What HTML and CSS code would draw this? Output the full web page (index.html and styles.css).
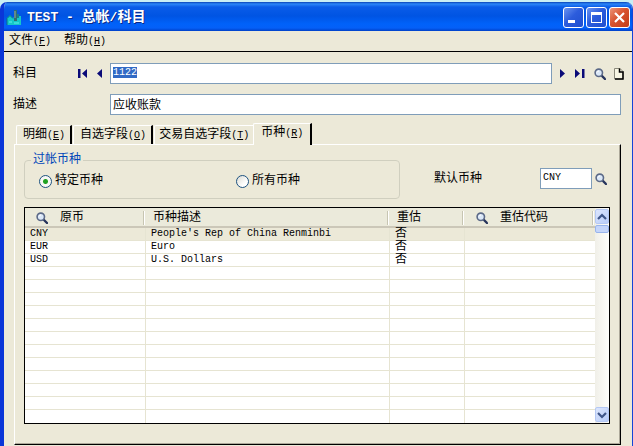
FILE: index.html
```html
<!DOCTYPE html>
<html lang="zh-CN">
<head>
    <meta charset="UTF-8">
    <meta name="viewport" content="width=device-width, initial-scale=1.0">
    <title>TEST - 总帐/科目</title>
    <link rel="stylesheet" href="styles.css">
</head>
<body>

    <svg class="sprite" aria-hidden="true">
        <symbol id="search" viewBox="0 0 12 12">
            <path d="M7.5 7.5L11 11" stroke="#27345c" stroke-width="2.4" stroke-linecap="round"/>
            <circle cx="4.8" cy="4.8" r="3.7" fill="#dbe8f8" stroke="#5c6a88" stroke-width="1.6"/>
            <path d="M3 4.5Q3.3 3 5 3" stroke="#fff" fill="none"/>
        </symbol>
    </svg>

    <div class="window">
        <header class="titlebar">
            <svg class="app-icon" width="16" height="16" viewBox="0 0 16 16" aria-hidden="true">
                <path d="M1 8L4 5L7 8L10 6H15V15H1Z" fill="#14c8c8"/>
                <path d="M8 0H11V11H8Z" fill="#2f6e72"/>
                <path d="M9 1V8" stroke="#9aa6a0"/>
                <path d="M11 4H13V8H11Z" fill="#1b7f8c"/>
                <path d="M1 15V8.500L4 5.500L7 8.500" stroke="#0a6f86" fill="none"/>
                <path d="M3 12H6M8 13H13" stroke="#5ff0e8"/>
            </svg>
            <h1><span class="en">TEST - </span>总帐<span class="en">/</span>科目</h1>
            <div class="win-buttons">
                <button class="win-btn" aria-label="最小化"><svg width="19" height="19" viewBox="0 0 19 19"><path d="M4 12H11V15H4Z" fill="#fff"/></svg></button>
                <button class="win-btn" aria-label="最大化"><svg width="19" height="19" viewBox="0 0 19 19"><path d="M4 4H15V15H4ZM5 7V14H14V7Z" fill="#fff" fill-rule="evenodd"/></svg></button>
                <button class="win-btn close" aria-label="关闭"><svg width="19" height="19" viewBox="0 0 19 19"><path d="M5 5L14 14M14 5L5 14" stroke="#fff" stroke-width="2.2"/></svg></button>
            </div>
        </header>

        <nav class="menubar">
            <button>文件<span class="en">(<u>F</u>)</span></button>
            <button>帮助<span class="en">(<u>H</u>)</span></button>
        </nav>

        <main>
            <div class="form">
                <div class="field-label">
                    <label for="account">科目</label>
                    <div class="nav-buttons">
                        <button class="icon-btn" aria-label="第一条"><svg width="12" height="11" viewBox="0 0 12 11"><path d="M1 1H3.500V10H1ZM10 1V10L5 5.500Z" fill="#0a0a78"/></svg></button>
                        <button class="icon-btn" aria-label="上一条"><svg width="6" height="11" viewBox="0 0 6 11"><path d="M5 1V10L0 5.500Z" fill="#0a0a78"/></svg></button>
                    </div>
                </div>
                <input type="text" id="account" class="en" value="1122">
                <div class="nav-buttons after">
                    <button class="icon-btn" aria-label="下一条"><svg width="6" height="11" viewBox="0 0 6 11"><path d="M0 1V10L5 5.500Z" fill="#0a0a78"/></svg></button>
                    <button class="icon-btn" aria-label="最后一条"><svg width="12" height="11" viewBox="0 0 12 11"><path d="M1 1V10L6 5.500ZM8 1H10.500V10H8Z" fill="#0a0a78"/></svg></button>
                    <button class="icon-btn" aria-label="查找"><svg width="12" height="12"><use href="#search"/></svg></button>
                    <button class="icon-btn" aria-label="新建"><svg width="10" height="12" viewBox="0 0 10 12"><path d="M.5 .5H6L9 3.500V11H.5Z" fill="#f8f6e4" stroke="#8a887a"/><path d="M5.500 .5V4H9V11H1" fill="none" stroke="#000" stroke-width="1.500"/></svg></button>
                </div>
                <label class="field-label" for="description">描述</label>
                <input type="text" id="description" class="wide" value="应收账款">
            </div>

            <div class="tabs" role="tablist">
                <button class="tab" role="tab">明细<span class="en">(<u>E</u>)</span></button>
                <button class="tab" role="tab">自选字段<span class="en">(<u>O</u>)</span></button>
                <button class="tab before-active" role="tab">交易自选字段<span class="en">(<u>T</u>)</span></button>
                <button class="tab active" role="tab" aria-selected="true">币种<span class="en">(<u>R</u>)</span></button>
            </div>

            <section class="panel">
                <div class="options">
                    <fieldset>
                        <legend>过帐币种</legend>
                        <label><input type="radio" name="posting" checked>特定币种</label>
                        <label><input type="radio" name="posting">所有币种</label>
                    </fieldset>
                    <div class="default-currency">
                        <label for="currency">默认币种</label>
                        <input type="text" id="currency" class="en" value="CNY">
                        <button class="icon-btn" aria-label="查找币种"><svg width="12" height="12"><use href="#search"/></svg></button>
                    </div>
                </div>

                <div class="list">
                    <table>
                        <colgroup>
                            <col class="col-code">
                            <col>
                            <col class="col-revalue">
                            <col class="col-revalue-code">
                        </colgroup>
                        <thead>
                            <tr>
                                <th><div class="head finder"><svg width="12" height="12"><use href="#search"/></svg>原币</div></th>
                                <th><div class="head">币种描述</div></th>
                                <th><div class="head">重估</div></th>
                                <th><div class="head finder"><svg width="12" height="12"><use href="#search"/></svg>重估代码</div></th>
                            </tr>
                        </thead>
                        <tbody>
                            <tr class="selected"><td>CNY</td><td>People's Rep of China Renminbi</td><td class="cn">否</td><td></td></tr>
                            <tr><td>EUR</td><td>Euro</td><td class="cn">否</td><td></td></tr>
                            <tr><td>USD</td><td>U.S. Dollars</td><td class="cn">否</td><td></td></tr>
                            <tr><td></td><td></td><td></td><td></td></tr>
                            <tr><td></td><td></td><td></td><td></td></tr>
                            <tr><td></td><td></td><td></td><td></td></tr>
                            <tr><td></td><td></td><td></td><td></td></tr>
                            <tr><td></td><td></td><td></td><td></td></tr>
                            <tr><td></td><td></td><td></td><td></td></tr>
                            <tr><td></td><td></td><td></td><td></td></tr>
                            <tr><td></td><td></td><td></td><td></td></tr>
                            <tr><td></td><td></td><td></td><td></td></tr>
                            <tr><td></td><td></td><td></td><td></td></tr>
                            <tr><td></td><td></td><td></td><td></td></tr>
                            <tr><td></td><td></td><td></td><td></td></tr>
                        </tbody>
                    </table>
                    <div class="scrollbar">
                        <button class="scroll-btn" aria-label="向上"><svg width="10" height="8" viewBox="0 0 10 8"><path d="M1 6L5 2L9 6" fill="none" stroke="#3f5688" stroke-width="2.2"/></svg></button>
                        <div class="thumb"></div>
                        <button class="scroll-btn down" aria-label="向下"><svg width="10" height="8" viewBox="0 0 10 8"><path d="M1 2L5 6L9 2" fill="none" stroke="#3f5688" stroke-width="2.2"/></svg></button>
                    </div>
                </div>
            </section>
        </main>
    </div>

    <script>
        const account = document.querySelector('#account');
        account.focus();
        account.select();
    </script>

</body>
</html>
```

FILE: styles.css
```css
* {
    box-sizing: border-box;
}

body {
    margin: 0;
    padding-top: 2px;
    background-color: #c9eef5;
    font-family: "Liberation Mono", "Noto Sans CJK SC", monospace;
    font-size: 12px;
    line-height: 16px;
    color: black;
}

button,
input {
    font: inherit;
    color: inherit;
}

button {
    margin: 0;
    padding: 0;
    border: none;
    background: none;
}

svg {
    display: block;
}

.sprite {
    position: absolute;
    width: 0;
    height: 0;
}

/* latin text is half the width of a chinese character */
.en {
    font-size: 10px;
}

.window {
    min-height: calc(100vh - 2px);
    border-left: 4px solid #0a36d8;
    border-right: 1px solid #1444d8;
    border-radius: 7px 7px 0 0;
    background-color: #ece9d8;
    overflow: hidden;
}

/* title bar */
.titlebar {
    display: flex;
    align-items: center;
    height: 29px;
    margin-left: -4px;
    padding: 2px 2px 0 6px;
    background: linear-gradient(#0842b8 0, #2a86f8 2px, #0a5ce8 5px, #0054e3 14px, #0062fa 22px, #0460f8 26px, #0040c8 29px);
}

.titlebar h1 {
    flex: 1;
    margin: 0 0 0 5px;
    font-size: 14px;
    line-height: 20px;
    font-weight: bold;
    color: white;
    white-space: pre;
    text-shadow: 1px 1px #0a2a88;
}

.titlebar .en {
    font-size: 13px;
}

.win-buttons {
    display: flex;
    gap: 2px;
}

.win-btn {
    width: 21px;
    height: 21px;
    border: 1px solid white;
    border-radius: 3px;
    background: linear-gradient(135deg, #6a94f0, #2c5cdc 45%, #1f4fd0);
}

.win-btn.close {
    background: linear-gradient(135deg, #ec9478, #d8532f 45%, #c23c18);
}

/* menu */
.menubar {
    display: flex;
    gap: 13px;
    height: 21px;
    padding: 1px 5px 0;
    border-bottom: 1px solid black;
}

main {
    padding: 11px 11px 0 9px;
}

/* account fields */
.form {
    display: grid;
    grid-template-columns: 97px 1fr 69px;
    row-gap: 10px;
}

.field-label {
    display: flex;
    justify-content: space-between;
    align-items: center;
    padding-right: 7px;
}

.nav-buttons {
    display: flex;
    align-items: center;
    gap: 8px;
}

.nav-buttons.after {
    justify-content: space-between;
    padding-left: 8px;
}

input[type="text"] {
    width: 100%;
    height: 21px;
    padding: 0 2px 2px;
    border: 1px solid #7f9db9;
    background-color: white;
    outline: none;
}

input::selection {
    background-color: #316ac5;
    color: white;
}

.wide {
    grid-column: 2 / 4;
}

/* tabs */
.tabs {
    display: flex;
    align-items: flex-end;
    height: 21px;
    margin-top: 8px;
    padding-left: 3px;
}

.tab {
    height: 19px;
    margin-right: 1px;
    padding: 0 5px 0 6px;
    border-top: 1px solid white;
    border-left: 1px solid white;
    border-right: 2px solid black;
    border-radius: 2px 0 0 0;
}

.tab.before-active {
    margin-right: 0;
    padding: 0 4px;
    border-right: none;
}

.tab.active {
    height: 22px;
    margin-bottom: -1px;
    padding: 0 7px 2px;
    background-color: #ece9d8;
    z-index: 1;
}

.panel {
    margin-left: 1px;
    padding: 7px 10px 20px 9px;
    border-top: 1px solid white;
    border-left: 1px solid white;
    border-right: 1px solid black;
    border-bottom: 1px solid black;
    box-shadow: inset -1px -1px #aca899;
}

.options {
    display: flex;
}

fieldset {
    display: flex;
    flex: 1;
    min-width: 0;
    height: 47px;
    margin: 0;
    padding: 5px 14px 0;
    border: 1px solid #d0cfbf;
    border-radius: 4px;
}

legend {
    margin-left: -8px;
    padding: 0 2px;
    color: #0046b8;
}

fieldset label {
    display: flex;
    flex: 0 0 197px;
    align-items: center;
    gap: 3px;
    height: 16px;
}

input[type="radio"] {
    appearance: none;
    width: 13px;
    height: 13px;
    margin: 0;
    border: 1px solid #1d5281;
    border-radius: 50%;
    background: linear-gradient(135deg, #dcdcd4, white 70%);
}

input[type="radio"]:checked {
    background: radial-gradient(circle, #21a121 0 2px, #f8f8f4 3px);
}

.default-currency {
    display: flex;
    align-items: center;
    gap: 3px;
    width: 210px;
    padding: 6px 3px 0 34px;
}

.default-currency label {
    flex: 1;
}

.default-currency input[type="text"] {
    width: 52px;
}

/* currency list */
.list {
    display: flex;
    margin-top: 8px;
    border: 1px solid black;
    background-color: white;
}

table {
    flex: 1;
    table-layout: fixed;
    border-spacing: 0;
    font-size: 10px;
    line-height: 12px;
}

.col-code {
    width: 121px;
}

.col-revalue {
    width: 75px;
}

.col-revalue-code {
    width: 130px;
}

th {
    height: 20px;
    padding: 2px 2px 0 0;
    border-bottom: 2px solid #cbc7b8;
    background-color: #ebeadb;
    font-size: 12px;
    font-weight: normal;
}

.head {
    display: flex;
    align-items: center;
    height: 14px;
    padding-left: 7px;
    border-right: 1px solid #c7c5b2;
    box-shadow: 1px 0 white;
}

.head.finder {
    gap: 12px;
    padding-left: 11px;
}

td {
    height: 13px;
    padding: 0 5px;
    border-right: 1px solid #e6e4d2;
    border-bottom: 1px solid #e6e4d2;
    white-space: nowrap;
}

td:last-child {
    border-right: none;
}

tbody tr:last-child td {
    border-bottom: none;
}

.selected td {
    background-color: #ece9d8;
}

.cn {
    font-size: 12px;
}

.scrollbar {
    display: flex;
    flex-direction: column;
    gap: 1px;
    width: 14px;
    padding: 1px 0;
    background: linear-gradient(90deg, #f0efe8, #fefefb);
}

.scroll-btn {
    display: flex;
    align-items: center;
    justify-content: center;
    height: 15px;
    border: 1px solid #b4c8f4;
    border-radius: 2px;
    background: linear-gradient(135deg, #dce6fd, #b8ccf8);
}

.scroll-btn.down {
    margin-top: auto;
}

.thumb {
    height: 8px;
    border: 1px solid #98b4ec;
    border-radius: 2px;
    background-color: #c4d5fa;
}
```
